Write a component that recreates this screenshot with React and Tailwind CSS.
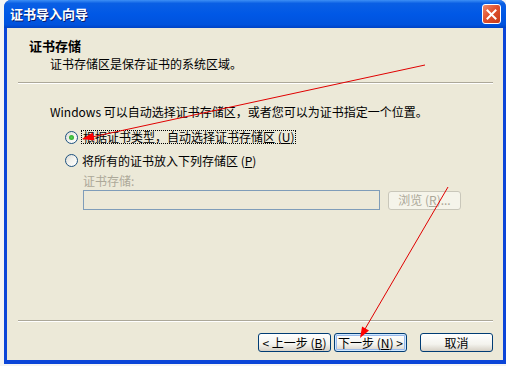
import React from "react";

// XP style wizard: 证书导入向导

const XpButton = ({children, focused, className = ""}) => (
  <button
    className={`h-[19px] w-[73px] rounded-[3px] border border-[#003c74] bg-[linear-gradient(to_bottom,#ffffff_0%,#f4f3ee_60%,#d6d0c5_100%)] text-[12px] leading-[12px] text-black ${
      focused ? "shadow-[inset_0_0_0_1px_#cee7ff,inset_0_0_0_2px_#98b8ea]" : ""
    } ${className}`}
  >
    {children}
  </button>
);

const Radio = ({checked}) => (
  <span className="flex h-[13px] w-[13px] shrink-0 items-center justify-center rounded-full border border-[#1c5180] bg-[linear-gradient(135deg,#dcdbd5_0%,#f3f3ef_50%,#ffffff_100%)]">
    {checked && (
      <span className="h-[5px] w-[5px] rounded-full bg-[radial-gradient(circle,#55d051_0%,#21a121_100%)]" />
    )}
  </span>
);

export default function App() {
  return (
    <div className="relative h-[366px] w-[506px] overflow-hidden bg-[#f4f4f4] font-['Noto_Sans_CJK_SC',sans-serif] text-black">
      <div className="ml-[4px] flex h-[364px] w-[502px] flex-col rounded-t-[7px] bg-[#0b45d8]">
        {/* title bar */}
        <div className="flex h-[28px] items-center justify-between rounded-t-[7px] bg-[linear-gradient(to_bottom,#3d8ff5_0%,#0a5fe4_12%,#0058e6_50%,#0052dd_88%,#0043c4_100%)] pl-[6px] pr-[5px]">
          <span className="text-[13px] font-bold leading-[14px] text-white [text-shadow:1px_1px_0_#0a1e6e]">
            证书导入向导
          </span>
          <span className="flex h-[20px] w-[19px] items-center justify-center rounded-[3px] border border-white bg-[linear-gradient(135deg,#f08a6c_0%,#e0512f_45%,#c73a17_100%)]">
            <svg width="11" height="11" viewBox="0 0 11 11">
              <path d="M1.5 1.5 L9.5 9.5 M9.5 1.5 L1.5 9.5" stroke="white" strokeWidth="2" strokeLinecap="square" />
            </svg>
          </span>
        </div>

        {/* body */}
        <div className="mx-[3px] mb-[4px] flex flex-1 flex-col bg-[#ece9d8]">
          <div className="h-[54px] pt-[11px]">
            <div className="pl-[22px] text-[13px] font-bold leading-[14px]">证书存储</div>
            <div className="mt-[4px] pl-[43px] text-[12px] leading-[14px]">证书存储区是保存证书的系统区域。</div>
          </div>
          <div className="ml-[11px] mr-[10px] border-t border-b border-t-[#aca899] border-b-white" />

          <div className="mt-[21px] pl-[43px] text-[12px] leading-[14px]">
            Windows 可以自动选择证书存储区，或者您可以为证书指定一个位置。
          </div>

          <div className="mt-[11px] flex items-center pl-[58px]">
            <Radio checked />
            <span className="ml-[3px] border border-dotted border-black px-[1px] text-[12px] leading-[12px]">
              根据证书类型，自动选择证书存储区 (<u>U</u>)
            </span>
          </div>
          <div className="mt-[10px] flex items-center pl-[58px]">
            <Radio />
            <span className="ml-[4px] text-[12px] leading-[13px]">
              将所有的证书放入下列存储区 (<u>P</u>)
            </span>
          </div>

          <div className="mt-[7px] pl-[76px] text-[12px] leading-[14px] text-[#aca899]">证书存储:</div>
          <div className="mt-[2px] flex items-center pl-[76px]">
            <div className="h-[20px] w-[297px] border border-[#7f9db9] bg-[#ece9d8]" />
            <div className="ml-[8px] flex h-[19px] w-[73px] items-center justify-center rounded-[3px] border border-[#c9c7ba] bg-[#f5f4ea] text-[12px] leading-[12px] text-[#aca899]">
              浏览 (<u>R</u>)...
            </div>
          </div>

          <div className="flex-1" />
          <div className="ml-[11px] mr-[10px] border-t border-b border-t-[#aca899] border-b-white" />
          <div className="mb-[8px] mt-[11px] flex justify-end pr-[10px]">
            <XpButton>&lt; 上一步 (<u>B</u>)</XpButton>
            <XpButton focused className="ml-[3px]">
              下一步 (<u>N</u>) &gt;
            </XpButton>
            <XpButton className="ml-[13px]">取消</XpButton>
          </div>
        </div>
      </div>

      {/* red annotation arrows */}
      <svg className="pointer-events-none absolute left-0 top-0" width="506" height="366">
        <line x1="425" y1="65" x2="92" y2="137" stroke="#e00000" strokeWidth="1" />
        <polygon points="82,139 94.6,140.4 92.9,132.6" fill="#ff0000" />
        <line x1="448" y1="187" x2="365" y2="329" stroke="#e00000" strokeWidth="1" />
        <polygon points="360,338 369,330.5 362.1,326.5" fill="#ff0000" />
      </svg>
    </div>
  );
}
